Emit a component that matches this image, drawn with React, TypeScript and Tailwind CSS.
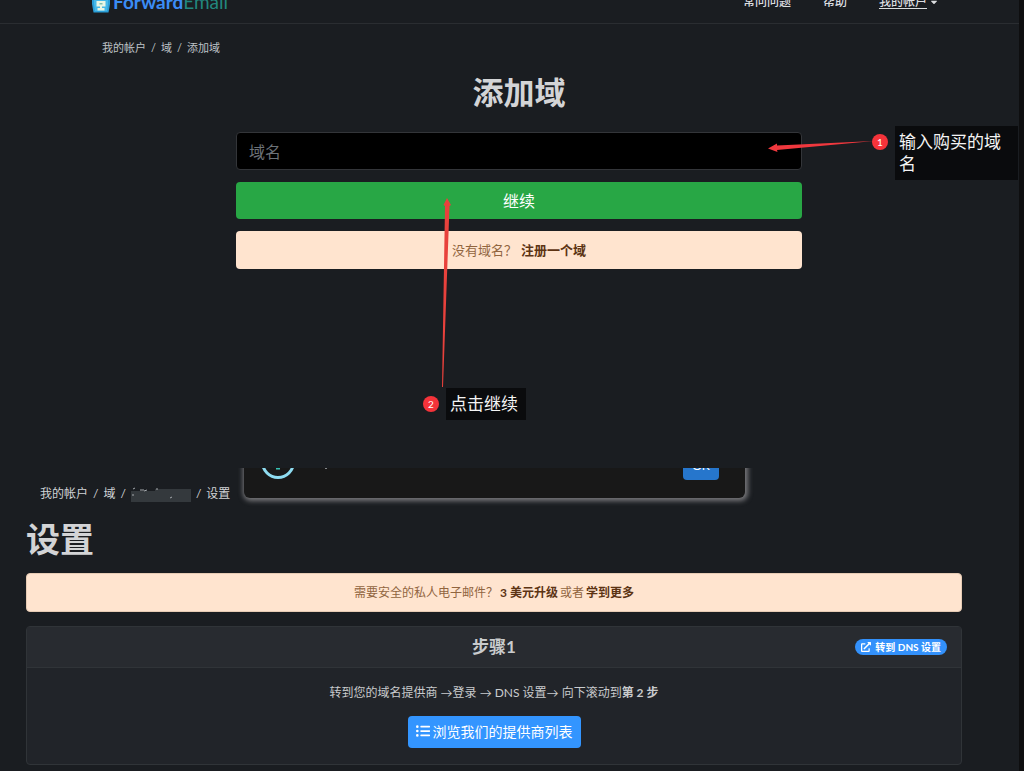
import { FaCaretDown, FaExternalLinkAlt, FaListUl } from "react-icons/fa";

const Logo = () => (
  <svg width="20" height="24" viewBox="0 0 20 24" className="shrink-0">
    <path d="M1 3h18v11l-1.500 8.500h-15L1 14z" fill="#2b9fd8" />
    <path d="M3 5h14v9l-1 7H4l-1-7z" fill="#45b8e8" />
    <path
      d="M5.500 11h9v5.500h-3.500V18h2.500v2.500h-7V18H9v-1.500H5.500z"
      fill="#e9f6e4"
    />
    <path d="M8.500 13h3v1.500h-3z" fill="#7fbfae" />
  </svg>
);

const Separator = () => <span aria-hidden="true">/</span>;

type MarkerProps = {
  step: number;
};

const Marker = ({ step }: MarkerProps) => (
  <span className="flex size-4 shrink-0 items-center justify-center rounded-full bg-[#f5333a] text-[10px] leading-none text-white">
    {step}
  </span>
);

const Header = () => (
  <header className="-mt-5 flex h-11 items-center justify-between border-b border-[#2a2d31] pr-20 pl-[91px]">
    <a href="#home" className="flex items-center text-[19px] leading-6">
      <Logo />
      <span className="ml-0.5 font-bold text-[#3b8cf5]">Forward</span>
      <span className="text-[#22877f]">Email</span>
    </a>
    <nav className="flex items-center gap-8 text-[12px] font-medium text-[#dcdee0]">
      <a href="#faq">常问问题</a>
      <a href="#help">帮助</a>
      <a href="#account" className="flex items-center gap-0.5">
        <span className="underline underline-offset-2">我的帐户</span>
        <FaCaretDown className="size-2.5" />
      </a>
    </nav>
  </header>
);

const AddDomain = () => (
  <section className="relative flow-root h-[468px]">
    <Header />
    <div className="pr-[73px] pl-[92px]">
      <nav
        aria-label="添加域路径"
        className="flex gap-[5px] px-2.5 pt-4 text-[11px] leading-4 text-[#bfc3c7]"
      >
        <a href="#account">我的帐户</a>
        <Separator />
        <a href="#domains">域</a>
        <Separator />
        <span>添加域</span>
      </nav>
      <h1 className="mt-4 text-center text-[31px] leading-10 font-bold text-[#d3d4d6]">
        添加域
      </h1>
      <form
        className="mx-auto mt-5 flex max-w-[566px] flex-col gap-3"
        onSubmit={(e) => e.preventDefault()}
      >
        <input
          type="text"
          aria-label="域名"
          placeholder="域名"
          className="h-[38px] rounded-sm border border-[#333539] bg-black px-3 text-[16px] text-white placeholder:text-[#6c7278]"
        />
        <button
          type="submit"
          className="h-[37px] rounded-sm bg-[#28a745] text-[16px] text-white"
        >
          继续
        </button>
        <p className="flex h-[38px] items-center justify-center gap-1 rounded-sm bg-[#ffe4cf] pt-0.5 text-[13px] text-[#91653f]">
          没有域名？
          <a href="#register" className="font-bold text-[#5c3313]">
            注册一个域
          </a>
        </p>
      </form>
    </div>

    {/* callouts over the form */}
    <svg
      width="110"
      height="16"
      viewBox="0 0 110 16"
      className="absolute top-[139px] left-[766px]"
    >
      <path d="M2 9.500 11 4.500 11 6.500 108 2 11 11 11.500 13z" fill="#f0383e" />
    </svg>
    <svg
      width="12"
      height="190"
      viewBox="0 0 12 190"
      className="absolute top-[197px] left-[440px]"
    >
      <path d="M7 1 11 8 9.500 9 3 190H2L5 9 3.500 8z" fill="#e8413c" />
    </svg>
    <div className="absolute top-[126px] left-[872px] flex gap-[7px]">
      <div className="pt-2">
        <Marker step={1} />
      </div>
      <p className="w-[123px] bg-[#0a0b0d] px-1 py-[5px] pr-3 text-[17px] leading-[22px] text-[#f4f4f4]">
        输入购买的域名
      </p>
    </div>
    <div className="absolute top-[388px] left-[423px] flex items-center gap-[7px]">
      <Marker step={2} />
      <p className="bg-[#0a0b0d] py-[5px] pr-2 pl-1 text-[17px] leading-[22px] text-[#f4f4f4]">
        点击继续
      </p>
    </div>
  </section>
);

const Settings = () => (
  <section className="relative overflow-hidden pt-4 pr-[57px] pb-1.5 pl-[26px]">
    <div className="absolute -top-8 left-[244px] flex h-[62px] w-[501px] items-end justify-between rounded-md bg-[#181818] px-4 pb-[18px] shadow-[1px_1px_5px_2px_#77777a]">
      <svg width="72" height="36" viewBox="0 0 72 36">
        <circle cx="18" cy="18" r="15.500" fill="none" stroke="#8edbf0" strokeWidth="3" />
        <path d="M16 23h4v2.500h-4z" fill="#35c3b5" />
        <path d="M65 23h2v2h-2z" fill="#85888b" />
      </svg>
      <button
        type="button"
        className="mr-2.5 h-7 w-9 rounded-sm bg-[#2676cc] text-[12px] leading-5 text-white"
      >
        OK
      </button>
    </div>

    <nav
      aria-label="设置路径"
      className="flex items-center gap-[5px] px-3.5 pt-px text-[12px] leading-[18px] text-[#d0d3d6]"
    >
      <a href="#account">我的帐户</a>
      <Separator />
      <a href="#domains">域</a>
      <Separator />
      <svg width="60" height="18" viewBox="0 0 60 18">
        <path d="M0 6h24V4h36v13H0z" fill="#34393d" />
        <path
          d="M2 4l2-1M2 9v2M9 5h4M13 6l3-1M26 3v2M39 13l2-1"
          stroke="#a5aaae"
        />
      </svg>
      <Separator />
      <span>设置</span>
    </nav>
    <h2 className="mt-3.5 text-[34px] leading-[44px] font-bold text-[#d3d4d6]">
      设置
    </h2>
    <p className="mt-3 flex h-[39px] items-center justify-center gap-0.5 rounded-sm border border-[#e6cbb4] bg-[#ffe4cf] text-[12px] text-[#91653f]">
      需要安全的私人电子邮件？
      <a href="#upgrade" className="font-bold text-[#5c3313]">
        3 美元升级
      </a>
      或者
      <a href="#more" className="font-bold text-[#5c3313]">
        学到更多
      </a>
    </p>

    <div className="mt-3.5 rounded-sm border border-[#303438] bg-[#212429]">
      <div className="grid h-[41px] grid-cols-[1fr_auto_1fr] items-center border-b border-[#303438] bg-[#282b30] px-3.5">
        <h3 className="col-start-2 text-[17px] font-bold text-[#c9cbcd]">
          步骤1
        </h3>
        <a
          href="#dns"
          className="flex h-4 items-center gap-1 justify-self-end rounded-full bg-[#3391fb] px-1.5 text-[10px] font-bold text-white"
        >
          <FaExternalLinkAlt className="size-2.5" />
          转到 DNS 设置
        </a>
      </div>
      <div className="flex flex-col items-center py-4">
        <p className="text-[12px] leading-[18px] text-[#c9cbcd]">
          转到您的域名提供商 →登录 → DNS 设置→ 向下滚动到
          <strong>第 2 步</strong>
        </p>
        <button
          type="button"
          className="mt-3.5 flex h-8 items-center gap-[3px] rounded-sm bg-[#3395ff] px-2 pb-0.5 text-[14px] text-white"
        >
          <FaListUl className="size-3.5" />
          浏览我们的提供商列表
        </button>
      </div>
    </div>
  </section>
);

export default function App() {
  return (
    <div className="flex min-h-screen overflow-hidden bg-[#0e0e0f] pr-[5px] font-[Lato,'Noto_Sans_CJK_SC',sans-serif]">
      <main className="min-w-0 flex-1 bg-[#1a1d21]">
        <AddDomain />
        <Settings />
      </main>
    </div>
  );
}
